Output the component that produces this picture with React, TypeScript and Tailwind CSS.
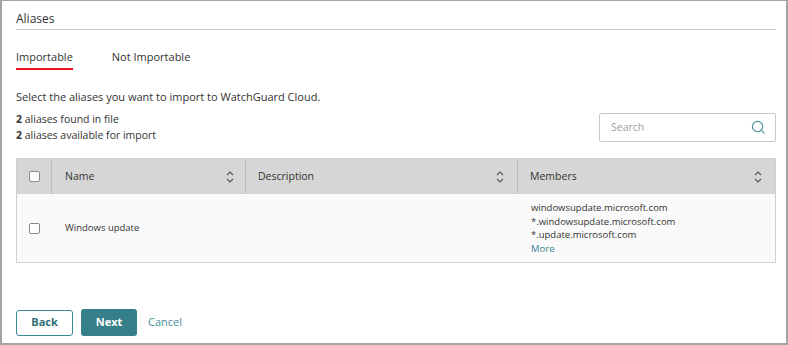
import React from "react";

const Sort = () => (
  <svg width="10" height="14" viewBox="0 0 10 14" fill="none" stroke="#555" strokeWidth="1.1">
    <path d="M2 5 L5 2 L8 5" />
    <path d="M2 9 L5 12 L8 9" />
  </svg>
);

const Check = () => (
  <div className="w-[11px] h-[11px] rounded-[2px] border border-[#8a8a8a] bg-white" />
);

export default function App() {
  return (
    <div
      className="w-[788px] h-[345px] bg-white border-t border-l-2 border-r-2 border-b-2 border-[#a3a3a3] text-[#333]"
      style={{ fontFamily: '"Open Sans", "Liberation Sans", sans-serif' }}
    >
      <div className="pl-[14px] pr-[10px]">
        <div className="pt-[9px] h-[29px] border-b border-[#c8c8c8] text-[12px] leading-[18px] text-[#333]">
          Aliases
        </div>
        <div className="flex gap-[39px] mt-[18px] text-[11px] leading-[17px]">
          <div className="flex flex-col">
            <span>Importable</span>
            <div className="mt-[3px] h-[2px] bg-[#e8151b]" />
          </div>
          <span>Not Importable</span>
        </div>
        <div className="mt-[19px] text-[11px] leading-[15px]">
          Select the aliases you want to import to WatchGuard Cloud.
        </div>
        <div className="flex justify-between items-start mt-[7px]">
          <div className="text-[10.5px] leading-[16px]">
            <div>
              <span className="font-bold">2</span> aliases found in file
            </div>
            <div>
              <span className="font-bold">2</span> aliases available for import
            </div>
          </div>
          <div className="mt-[2px] w-[177px] h-[29px] border border-[#c9c9c9] rounded-[2px] flex items-center justify-between pl-[11px] pr-[9px]">
            <span className="text-[10.5px] text-[#a0a0a0]">Search</span>
            <svg width="15" height="15" viewBox="0 0 16 16" fill="none" stroke="#4a8f99" strokeWidth="1.2">
              <circle cx="7" cy="7" r="5.5" />
              <path d="M11 11 L14.5 14.5" />
            </svg>
          </div>
        </div>
        <div className="mt-[15px] border border-[#d0d0d0]">
          <div className="flex h-[35px] bg-[#d6d6d6] text-[10.5px]">
            <div className="w-[35px] flex items-center justify-center border-r border-[#bdbdbd]">
              <Check />
            </div>
            <div className="w-[194px] flex items-center justify-between pl-[13px] pr-[10px] border-r border-[#bdbdbd]">
              <span>Name</span>
              <Sort />
            </div>
            <div className="w-[272px] flex items-center justify-between pl-[12px] pr-[12px] border-r border-[#bdbdbd]">
              <span>Description</span>
              <Sort />
            </div>
            <div className="flex-1 flex items-center justify-between pl-[12px] pr-[12px]">
              <span>Members</span>
              <Sort />
            </div>
          </div>
          <div className="flex h-[68px] bg-[#fafafa] text-[9.5px]">
            <div className="w-[35px] flex items-center justify-center">
              <Check />
            </div>
            <div className="w-[194px] flex items-center pl-[13px]">Windows update</div>
            <div className="w-[272px]" />
            <div className="flex-1 pl-[13px] pt-[7px] leading-[13.5px]">
              <div>windowsupdate.microsoft.com</div>
              <div>*.windowsupdate.microsoft.com</div>
              <div>*.update.microsoft.com</div>
              <div className="text-[#3a8793]">More</div>
            </div>
          </div>
        </div>
        <div className="flex items-center mt-[46px] text-[11px]">
          <button className="w-[57px] h-[26px] border border-[#3c8a94] rounded-[3px] text-[#2e6f78] font-bold bg-white">
            Back
          </button>
          <button className="ml-[8px] w-[56px] h-[27px] rounded-[3px] bg-[#357f88] text-white font-bold">
            Next
          </button>
          <span className="ml-[11px] text-[#3f8c97]">Cancel</span>
        </div>
      </div>
    </div>
  );
}
